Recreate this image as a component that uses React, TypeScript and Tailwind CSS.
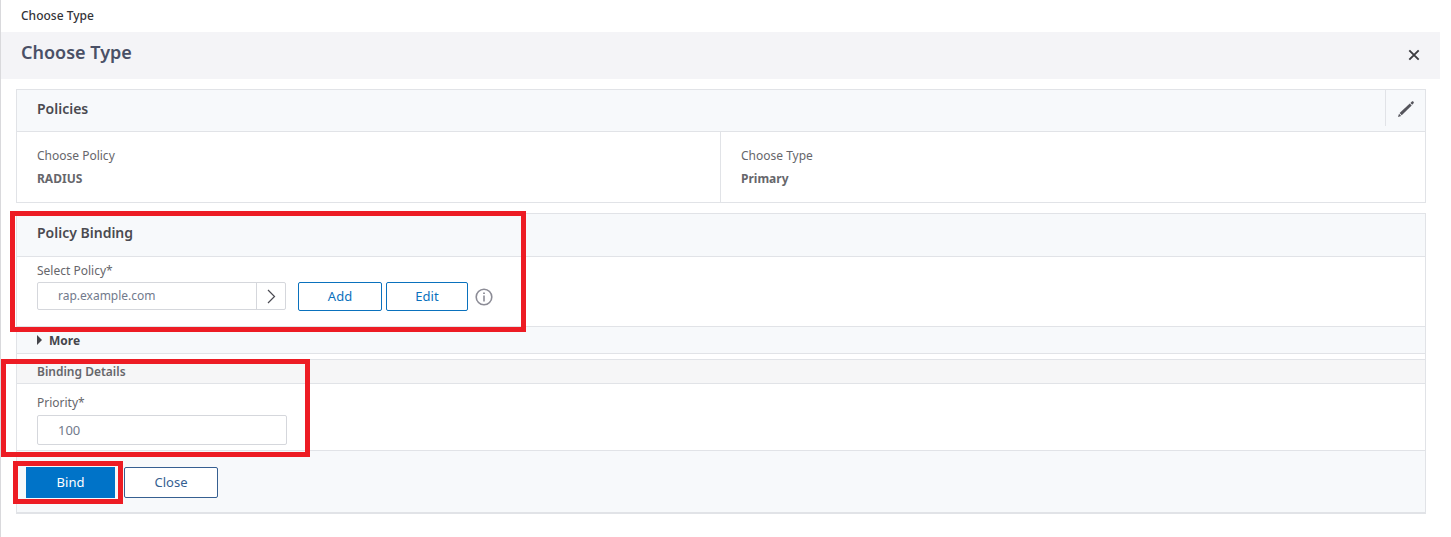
import { useState } from "react";
import type { ReactNode } from "react";

const policyInfo = [
  { label: "Choose Policy", value: "RADIUS" },
  { label: "Choose Type", value: "Primary" },
];

const CloseIcon = () => (
  <svg width="12" height="12" viewBox="0 0 12 12" fill="none" stroke="#3c3c41" strokeWidth="1.9" aria-hidden="true">
    <path d="M1.3 1.3l9.4 9.4M10.7 1.3l-9.4 9.4" />
  </svg>
);

const PencilIcon = () => (
  <svg width="18" height="18" viewBox="0 0 18 18" fill="#55555c" aria-hidden="true">
    <path d="M1 17l1-3.2 2.2 2.2z" />
    <path d="M2.6 13.1L12.8 3.6l1.9 2-10 9.7z" />
    <path d="M13.4 3l1.5-1.4c.4-.4 1-.4 1.4 0l.3.3c.4.4.4 1 0 1.4l-1.4 1.5z" />
  </svg>
);

const ChevronIcon = () => (
  <svg width="9" height="15" viewBox="0 0 9 15" fill="none" stroke="#4a4a52" strokeWidth="1.2" aria-hidden="true">
    <path d="M1 1l6.5 6.5L1 14" />
  </svg>
);

const InfoIcon = () => (
  <svg width="18" height="18" viewBox="0 0 18 18" fill="none" stroke="#8c8c96" aria-hidden="true">
    <circle cx="9" cy="9" r="7.8" strokeWidth="1.6" />
    <path d="M9 7.5v6" strokeWidth="1.6" />
    <path d="M9 4.5v1.6" strokeWidth="1.8" />
  </svg>
);

// red frame drawn over a step of the form
const Highlight = ({ className }: { className: string }) => (
  <div className={`pointer-events-none absolute z-10 border-[5px] border-[#ed1c24] ${className}`} />
);

const Panel = ({ children, className = "" }: { children: ReactNode; className?: string }) => (
  <section className={`relative border border-[#e1e3e7] ${className}`}>{children}</section>
);

const App = () => {
  const [policy, setPolicy] = useState("rap.example.com");
  const [priority, setPriority] = useState("100");
  const [showMore, setShowMore] = useState(false);

  return (
    <div className="mr-[11px] min-h-screen border-l border-[#d9d9dc] bg-white font-['Noto_Sans',sans-serif] text-xs text-[#66666b]">
      <nav className="flex h-8 items-center pl-5 font-medium text-[#333338]">Choose Type</nav>

      <header className="flex h-[47px] items-center justify-between bg-[#f4f4f7] px-5 pb-1">
        <h1 className="pb-1 text-lg leading-6 font-semibold text-[#4a5066]">Choose Type</h1>
        <button type="button" aria-label="Close dialog" className="cursor-pointer pt-[3px]">
          <CloseIcon />
        </button>
      </header>

      <main className="pt-[10px] pr-[14px] pb-6 pl-[15px]">
        <Panel>
          <div className="flex h-[42px] justify-between border-b border-[#e1e3e7] bg-[#f7f9fb]">
            <h2 className="pt-[9px] pl-5 text-sm leading-5 font-semibold text-[#4a4a50]">Policies</h2>
            <button
              type="button"
              aria-label="Edit policies"
              className="flex h-9 w-10 cursor-pointer items-center justify-center border-l border-[#e1e3e7] pt-[2px]"
            >
              <PencilIcon />
            </button>
          </div>
          <dl className="grid grid-cols-2 divide-x divide-[#e1e3e7]">
            {policyInfo.map((item) => (
              <div key={item.label} className="h-[70px] px-5 pt-3">
                <dt className="leading-6">{item.label}</dt>
                <dd className="font-bold leading-[22px]">{item.value}</dd>
              </div>
            ))}
          </dl>
        </Panel>

        <Panel className="mt-[10px] border-b-2">
          <div className="relative">
            <h2 className="h-[43px] border-b border-[#e1e3e7] bg-[#f7f9fb] px-5 pt-[9px] text-sm leading-5 font-semibold text-[#4a4a50]">
              Policy Binding
            </h2>
            <div className="h-[69px] px-5 pt-1">
              <label htmlFor="policy" className="block leading-5">
                Select Policy*
              </label>
              <div className="flex items-start pt-px">
                <div className="flex h-7 w-[249px] rounded-xs border border-[#d5d7dc]">
                  <input
                    id="policy"
                    value={policy}
                    onChange={(e) => setPolicy(e.target.value)}
                    className="min-w-0 flex-1 pl-5 text-xs text-[#727a8c] outline-none"
                  />
                  <button
                    type="button"
                    aria-label="Pick policy"
                    className="flex w-[29px] cursor-pointer items-center justify-center border-l border-[#d5d7dc]"
                  >
                    <ChevronIcon />
                  </button>
                </div>
                <button
                  type="button"
                  className="ml-3 h-[29px] w-[84px] cursor-pointer rounded-xs border border-[#0a71bd] text-[13px] text-[#0a71bd]"
                >
                  Add
                </button>
                <button
                  type="button"
                  className="ml-1 h-[29px] w-[82px] cursor-pointer rounded-xs border border-[#0a71bd] text-[13px] text-[#0a71bd]"
                >
                  Edit
                </button>
                <button type="button" aria-label="Policy help" className="ml-[7px] cursor-pointer self-center">
                  <InfoIcon />
                </button>
              </div>
            </div>
            <Highlight className="-top-[3px] -left-[7px] h-[121px] w-[516px]" />
          </div>

          <button
            type="button"
            aria-expanded={showMore}
            onClick={() => setShowMore(!showMore)}
            className="flex h-7 w-full cursor-pointer items-start gap-[7px] border-y border-[#e1e3e7] bg-[#f7f9fb] px-5 pt-2 text-[#45454b]"
          >
            <svg width="5" height="10" viewBox="0 0 5 10" fill="#45454b" aria-hidden="true">
              <path d="M0 0l5 5-5 5z" />
            </svg>
            <span className="leading-3 font-bold">More</span>
          </button>

          <div className="relative mt-[5px]">
            <h3 className="h-[25px] border-y border-[#e1e3e7] bg-[#f6f6f7] px-5 leading-[23px] font-semibold">
              Binding Details
            </h3>
            <div className="h-[66px] px-5 pt-[7px]">
              <label htmlFor="priority" className="block leading-6">
                Priority*
              </label>
              <input
                id="priority"
                value={priority}
                onChange={(e) => setPriority(e.target.value)}
                className="block h-[30px] w-[250px] rounded-xs border border-[#d5d7dc] pl-5 text-[13px] text-[#727a8c] outline-none"
              />
            </div>
            <Highlight className="top-0 -left-4 h-[98px] w-[309px]" />
          </div>

          <footer className="flex h-[62px] gap-[9px] border-t border-[#e1e3e7] bg-[#f7f9fb] pt-4 pl-[9px]">
            <div className="relative">
              <button
                type="button"
                className="block h-[31px] w-[89px] cursor-pointer bg-[#0073c8] text-[13px] text-white"
              >
                Bind
              </button>
              <Highlight className="-top-[6px] -left-[13px] h-[43px] w-[110px]" />
            </div>
            <button
              type="button"
              className="h-[31px] w-[94px] cursor-pointer rounded-xs border border-[#365f91] bg-white text-[13px] text-[#365f91]"
            >
              Close
            </button>
          </footer>
        </Panel>
      </main>
    </div>
  );
};

export default App;
